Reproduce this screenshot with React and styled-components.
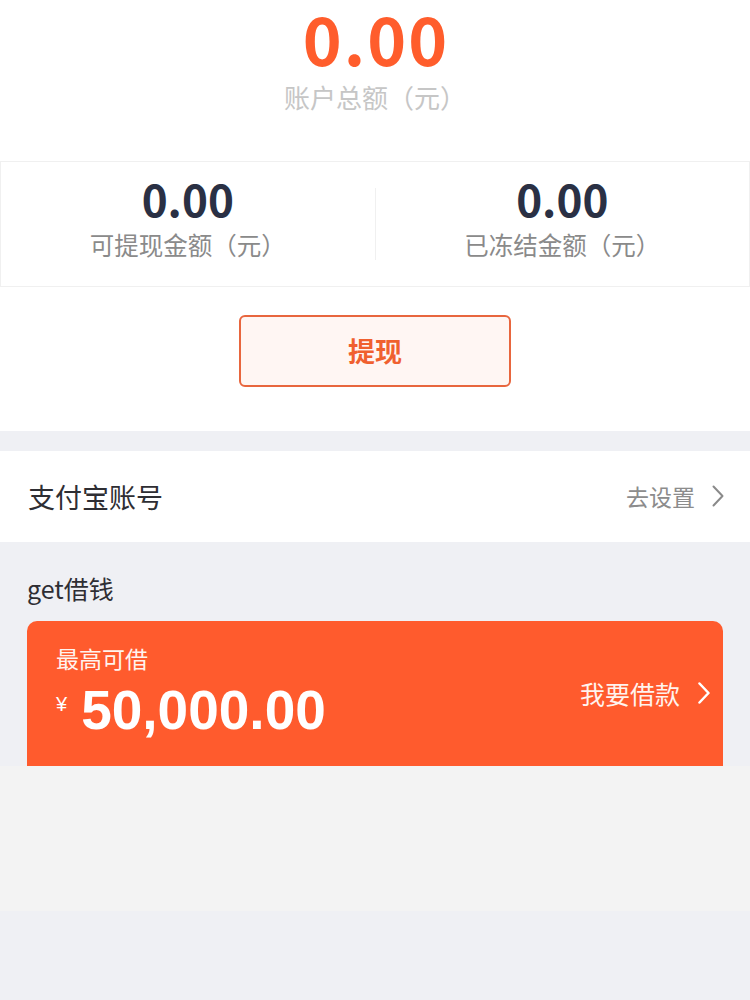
import React from "react";
import styled, { createGlobalStyle } from "styled-components";

const GlobalStyle = createGlobalStyle`
  html, body {
    margin: 0;
    padding: 0;
    background: #eff0f4;
  }
  body {
    font-family: "Noto Sans CJK SC", "Noto Sans", sans-serif;
    -webkit-font-smoothing: antialiased;
  }
  * { box-sizing: border-box; }
`;

const Page = styled.div`
  width: 750px;
  min-height: 1000px;
  background: #eff0f4;
  display: flex;
  flex-direction: column;
`;

const TopPanel = styled.section`
  background: #ffffff;
  padding: 4px 0 44px;
  display: flex;
  flex-direction: column;
  align-items: stretch;
`;

const TotalBlock = styled.div`
  display: flex;
  flex-direction: column;
  align-items: center;
`;

const TotalAmount = styled.div`
  font-family: "Noto Sans CJK SC", sans-serif;
  font-weight: 700;
  font-size: 66px;
  line-height: 1;
  color: #ff5d2c;
  letter-spacing: 2px;
  padding-left: 2px;
`;

const TotalLabel = styled.div`
  margin-top: 14px;
  font-size: 26px;
  line-height: 1;
  color: #c6c6c6;
`;

const Summary = styled.div`
  margin-top: 51px;
  border: 1px solid #f0f0f0;
  display: grid;
  grid-template-columns: 1fr 1px 1fr;
  align-items: center;
`;

const SummaryCol = styled.div`
  display: flex;
  flex-direction: column;
  align-items: center;
  padding: 14px 0 28px;
`;

const SummaryAmount = styled.div`
  font-weight: 700;
  font-size: 44px;
  line-height: 1;
  color: #2a3044;
`;

const SummaryLabel = styled.div`
  margin-top: 13px;
  font-size: 24.5px;
  line-height: 1;
  color: #8a8a8a;
`;

const Divider = styled.div`
  width: 1px;
  height: 72px;
  background: #f0f0f0;
`;

const ButtonWrap = styled.div`
  margin-top: 28px;
  display: flex;
  justify-content: center;
`;

const WithdrawButton = styled.button`
  width: 272px;
  height: 72px;
  border: 2px solid #e8663e;
  border-radius: 6px;
  background: #fff6f3;
  color: #f0602f;
  font-family: "Noto Sans CJK SC", sans-serif;
  font-weight: 700;
  font-size: 27px;
  line-height: 1;
  padding: 0;
  display: flex;
  align-items: center;
  justify-content: center;
`;

const Spacer = styled.div`
  height: ${(p) => p.$h}px;
  background: ${(p) => p.$bg || "#eff0f4"};
  flex-shrink: 0;
`;

const SettingRow = styled.div`
  height: 91px;
  background: #ffffff;
  display: flex;
  align-items: center;
  justify-content: space-between;
  padding: 0 25px 0 28px;
`;

const RowTitle = styled.div`
  font-size: 27px;
  line-height: 1;
  color: #2e2e33;
`;

const RowAction = styled.div`
  display: flex;
  align-items: center;
  gap: 16px;
  font-size: 23px;
  line-height: 1;
  color: #8c8c8c;
`;

const LoanSection = styled.section`
  background: #eff0f4;
  padding: 34px 27px 0;
  display: flex;
  flex-direction: column;
`;

const SectionTitle = styled.div`
  font-size: 25px;
  line-height: 1;
  color: #2e2e33;
`;

const LoanCard = styled.div`
  margin-top: 20px;
  height: 145px;
  border-radius: 10px 10px 0 0;
  background: #ff5b2d;
  color: #ffffff;
  display: flex;
  justify-content: space-between;
  align-items: center;
  padding: 0 12px 0 29px;
  overflow: hidden;
`;

const LoanInfo = styled.div`
  align-self: flex-start;
  padding-top: 26px;
  display: flex;
  flex-direction: column;
`;

const LoanLabel = styled.div`
  font-size: 23px;
  line-height: 1;
  color: #fff3ee;
`;

const AmountRow = styled.div`
  margin-top: 13px;
  display: flex;
  align-items: flex-start;
`;

const Currency = styled.span`
  font-family: "Liberation Sans", Arial, sans-serif;
  font-size: 20px;
  line-height: 1;
  margin-top: 11px;
  margin-right: 14px;
`;

const LoanAmount = styled.span`
  font-family: "Liberation Sans", Arial, sans-serif;
  font-weight: 700;
  font-size: 55px;
  line-height: 1;
`;

const LoanLink = styled.div`
  display: flex;
  align-items: center;
  gap: 17px;
  font-size: 25px;
  line-height: 1;
  color: #fff3ee;
`;

const FooterCover = styled.div`
  height: 145px;
  background: #f3f3f3;
`;

const Chevron = ({ color, width = 2 }) => (
  <svg width="14" height="22" viewBox="0 0 14 22" fill="none">
    <path
      d="M2.5 1.5 L11.5 11 L2.5 20.5"
      stroke={color}
      strokeWidth={width}
      strokeLinecap="round"
      strokeLinejoin="round"
    />
  </svg>
);

export default function App() {
  return (
    <>
      <GlobalStyle />
      <Page>
        <TopPanel>
          <TotalBlock>
            <TotalAmount>0.00</TotalAmount>
            <TotalLabel>账户总额（元）</TotalLabel>
          </TotalBlock>
          <Summary>
            <SummaryCol>
              <SummaryAmount>0.00</SummaryAmount>
              <SummaryLabel>可提现金额（元）</SummaryLabel>
            </SummaryCol>
            <Divider />
            <SummaryCol>
              <SummaryAmount>0.00</SummaryAmount>
              <SummaryLabel>已冻结金额（元）</SummaryLabel>
            </SummaryCol>
          </Summary>
          <ButtonWrap>
            <WithdrawButton>提现</WithdrawButton>
          </ButtonWrap>
        </TopPanel>
        <Spacer $h={20} />
        <SettingRow>
          <RowTitle>支付宝账号</RowTitle>
          <RowAction>
            去设置
            <Chevron color="#8a8a8a" width={2} />
          </RowAction>
        </SettingRow>
        <LoanSection>
          <SectionTitle>get借钱</SectionTitle>
          <LoanCard>
            <LoanInfo>
              <LoanLabel>最高可借</LoanLabel>
              <AmountRow>
                <Currency>¥</Currency>
                <LoanAmount>50,000.00</LoanAmount>
              </AmountRow>
            </LoanInfo>
            <LoanLink>
              我要借款
              <Chevron color="#ffffff" width={2.5} />
            </LoanLink>
          </LoanCard>
        </LoanSection>
        <FooterCover />
      </Page>
    </>
  );
}
